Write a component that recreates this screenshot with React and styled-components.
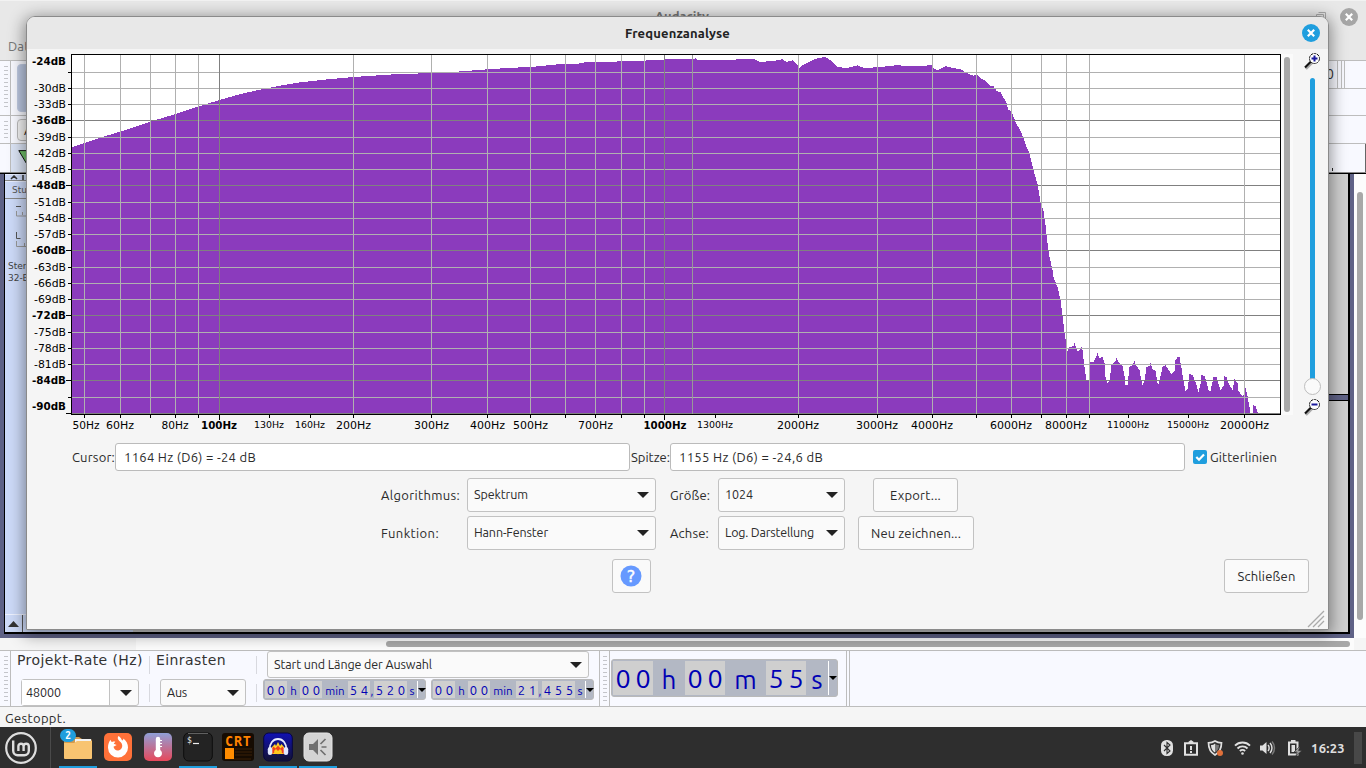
import React, { useLayoutEffect, useRef } from "react";
import styled, { createGlobalStyle } from "styled-components";

const Global = createGlobalStyle`
  *, *::before, *::after { box-sizing: border-box; }
  body { margin: 0; overflow: hidden; background: #2e2e2e; }
`;

const ui = `"Ubuntu", "Noto Sans", sans-serif`;
const dejavu = `"DejaVu Sans", sans-serif`;

/* ---------- text with a fixed advance width ---------- */

const TextSpan = styled.span`
  display: inline-block;
  flex: none;
  white-space: pre;
  font-family: ${(p) => (p.$face === "dejavu" ? dejavu : ui)};
  font-size: ${(p) => p.$size || 13}px;
  font-weight: ${(p) => p.$weight || 400};
  color: ${(p) => p.$color || "#2b2b2b"};
  line-height: ${(p) => p.$line || 18}px;
`;

function Text({ w, size, weight, color, face, line, children }) {
  const ref = useRef(null);
  useLayoutEffect(() => {
    const el = ref.current;
    if (!w) return;
    el.style.letterSpacing = "0px";
    const natural = el.getBoundingClientRect().width;
    el.style.letterSpacing = `${(w - natural) / el.textContent.length}px`;
  }, [w]);
  return (
    <TextSpan ref={ref} $size={size} $weight={weight} $color={color} $face={face} $line={line}>
      {children}
    </TextSpan>
  );
}

/* ---------- screen and main window ---------- */

const Screen = styled.div`
  position: relative;
  width: 1366px;
  height: 768px;
  overflow: hidden;
  display: flex;
  flex-direction: column;
  background: #f5f5f5;
`;

const MainTitle = styled.div`
  flex: none;
  height: 34px;
  display: flex;
  align-items: center;
  justify-content: center;
  padding: 0 8px 2px 326px;
  background: #e8e8e8;
  border-top: 1px solid #f2f2f2;
`;
const TitleCaption = styled.div`
  flex: 1;
  padding: 0 0 2px 329px;
  display: flex;
`;
const TitleButtons = styled.div`
  display: flex;
  align-items: center;
  gap: 14px;
`;
const MenuBar = styled.div`
  flex: none;
  height: 27px;
  padding: 3px 8px 0;
  background: #e8e8e8;
  border-bottom: 1px solid #bdbdbd;
`;
const ToolRow = styled.div`
  flex: none;
  height: ${(p) => p.$h}px;
  display: flex;
  justify-content: space-between;
  background: #f8f9ff;
  border-bottom: 1px solid ${(p) => p.$line || "#bdbdbd"};
`;
const RowSide = styled.div`
  display: flex;
  height: 100%;
`;
const Grip = styled.div`
  width: 11px;
  flex: none;
  border-right: 1px solid #bdbdbd;
  border-left: ${(p) => (p.$left ? "1px solid #bdbdbd" : "0")};
  padding: ${(p) => p.$pad || "5px"} 2px 5px ${(p) => (p.$left ? 3 : 4)}px;
  &::before {
    content: "";
    display: block;
    height: 100%;
    background: ${(p) =>
      p.$plain ? "none" : "repeating-linear-gradient(#c4c5ca 0 1px, transparent 1px 4px)"};
  }
`;
const ToolButton = styled.div`
  margin: 3px 0 0 6px;
  width: 50px;
  height: ${(p) => p.$h}px;
  border-radius: 4px;
  border: 1px solid ${(p) => p.$line};
  background: ${(p) => p.$bg};
  padding: 1px 6px;
`;
const PinBox = styled.div`
  width: 30px;
  background: #dbe4f5;
  padding: 6px 0 0 7px;
`;
const MeterEnd = styled.div`
  display: flex;
  width: 38px;
  height: 28px;
  border-bottom: 1px solid #bdbdbd;
`;
const MeterStub = styled.div`
  width: ${(p) => p.$w}px;
  flex: none;
  border-right: 1px solid #bdbdbd;
`;
const MeterDigit = styled.div`
  width: 9px;
  flex: none;
  display: flex;
  justify-content: flex-end;
  padding: 4px 3px 0 0;
`;
const RulerEnd = styled.div`
  width: 34px;
  border-right: 1px solid #666;
  &::before {
    content: "";
    display: block;
    width: 1px;
    height: 3px;
    margin: 24px 0 0 0;
    background: #222;
  }
`;
const Workspace = styled.div`
  flex: none;
  height: 465px;
  display: flex;
`;
const Tracks = styled.div`
  width: 1354px;
  display: flex;
  background: #5f6286;
  padding: 0 4px 4px;
  border-top: 1px solid #000;
`;
const TrackFrame = styled.div`
  flex: 1;
  display: flex;
  justify-content: space-between;
  border: solid #000;
  border-width: 0 2px 2px 1px;
  background: linear-gradient(90deg, #c8c8c8 405px, #ccd4ea 405px 635px, #c8c8c8 635px);
`;
const TrackPanel = styled.div`
  width: 128px;
  background: #cddaf8;
  display: flex;
  flex-direction: column;
  color: #555;
`;
const PanelLine = styled.div`
  height: ${(p) => p.$h}px;
  flex: none;
  display: flex;
  padding: ${(p) => p.$pad || "0"};
  border-bottom: ${(p) => (p.$line ? "1px solid #888" : "0")};
  border-top: ${(p) => (p.$line ? "1px solid #e8eeff" : "0")};
`;
const CollapseRow = styled.div`
  margin-top: auto;
  height: 18px;
  display: flex;
  border-top: 1px solid #eef2ff;
`;
const CollapseCell = styled.div`
  width: 18px;
  display: flex;
  align-items: center;
  justify-content: center;
  border-right: 1px solid #555;
`;
const ClipEnd = styled.div`
  width: 60px;
  display: flex;
  flex-direction: column;
`;
const ClipArea = styled.div`
  height: ${(p) => p.$h}px;
  flex: ${(p) => (p.$h ? "none" : 1)};
  background: #cfcfcf;
`;
const ClipGap = styled.div`
  height: 7px;
  background: #5f6286;
  border: solid #000;
  border-width: 1px 0;
`;
const VScroll = styled.div`
  width: 12px;
  background: #fcfcfc;
  padding: 18px 3px 18px;
  border-top: 1px solid #000;
  &::before {
    content: "";
    display: block;
    height: 100%;
    width: 6px;
    border-radius: 3px;
    background: #a8a8a8;
  }
`;
const HScroll = styled.div`
  flex: none;
  height: 13px;
  background: linear-gradient(90deg, #f5f5f5 136px, #fcfcfc 136px 1354px, #f5f5f5 1354px);
  border-bottom: 1px solid #bdbdbd;
  padding: 3px 16px 3px 386px;
  &::before {
    content: "";
    display: block;
    height: 6px;
    border-radius: 3px;
    background: #a8a8a8;
  }
`;

/* ---------- selection toolbar ---------- */

const BottomBar = styled.div`
  flex: none;
  height: 56px;
  display: flex;
  background: #f8f9ff;
  border-bottom: 1px solid #bdbdbd;
`;
const BarColumn = styled.div`
  width: ${(p) => p.$w}px;
  flex: none;
  padding-left: ${(p) => p.$pl || 0}px;
  display: flex;
  flex-direction: column;
`;
const BarHeading = styled.div`
  height: 28px;
  display: flex;
  margin-left: -4px;
`;
const SepColumn = styled.div`
  width: 1px;
  flex: none;
  display: flex;
  flex-direction: column;
  gap: 10px;
  padding-top: 5px;
  &::before,
  &::after {
    content: "";
    height: 18px;
    background: #d8d9df;
  }
`;
const Select = styled.div`
  width: ${(p) => p.$w}px;
  height: ${(p) => p.$h}px;
  flex: none;
  display: flex;
  align-items: center;
  justify-content: space-between;
  padding: 0 6px;
  border: 1px solid #c2c2c2;
  border-radius: 3px;
  background: #fafafa;
  & > span {
    padding-bottom: 2px;
  }
`;
const Combo = styled.div`
  width: 118px;
  height: 27px;
  display: flex;
  border: 1px solid #c2c2c2;
  border-radius: 3px;
  background: #fafafa;
`;
const ComboField = styled.div`
  width: 88px;
  padding: 3px 0 0 4px;
  background: #fff;
  border-right: 1px solid #c2c2c2;
`;
const ComboArrow = styled.div`
  flex: 1;
  display: flex;
  align-items: center;
  justify-content: center;
  padding-left: 3px;
`;
const TimeRow = styled.div`
  display: flex;
  gap: 5px;
  margin: 1px 0 0 -4px;
`;
const TimeBox = styled.div`
  display: flex;
  flex: none;
  width: ${(p) => (p.$big ? 227 : 163)}px;
  height: ${(p) => (p.$big ? 38 : 21)}px;
  border: 1px solid #b9b9b9;
  border-radius: 3px;
  background: #b3b8c4;
  padding: 1px;
`;
const Digit = styled.span`
  width: ${(p) => (p.$big ? 20 : 11)}px;
  height: 100%;
  flex: none;
  background: #cfcfcf;
  color: #0000b4;
  font: ${(p) => (p.$big ? "27px/34px" : "13px/18px")} ${ui};
  text-align: center;
`;
const Unit = styled.span`
  width: ${(p) => p.$w}px;
  flex: none;
  color: #0000b4;
  font: ${(p) => (p.$big ? "26px/38px" : "11.5px/20px")} ${ui};
  text-align: center;
  white-space: nowrap;
`;
const TimeDrop = styled.span`
  flex: 1;
  display: flex;
  align-items: center;
  justify-content: center;
  border-left: 1px solid #fff;
`;
const BigTimeCell = styled.div`
  width: 237px;
  flex: none;
  padding: 8px 0 0 1px;
  border-right: 1px solid #bdbdbd;
`;
const BarEdge = styled.div`
  width: 3px;
  border-right: 1px solid #bdbdbd;
`;
const StatusBar = styled.div`
  flex: none;
  height: 20px;
  padding: 2px 5px;
  background: #f5f5f5;
`;

/* ---------- task bar ---------- */

const TaskBar = styled.div`
  position: relative;
  flex: none;
  height: 41px;
  display: flex;
  background: #2e2e2e;
`;
const StartCell = styled.div`
  width: 51px;
  padding: 5px 0 0 5px;
  border-right: 1px solid #4a4a4a;
`;
const TaskList = styled.div`
  display: flex;
  gap: 2px;
  padding-left: 8px;
  flex: 1;
`;
const Task = styled.div`
  position: relative;
  width: 38px;
  display: flex;
  justify-content: center;
  padding-top: 4px;
  border-bottom: 2px solid ${(p) => (p.$active ? "#1f9ede" : "transparent")};
`;
const Badge = styled.span`
  position: absolute;
  left: 1px;
  top: 2px;
  width: 16px;
  height: 13px;
  border-radius: 7px;
  background: #1f9ede;
  color: #fff;
  font: 700 10px/13px ${ui};
  text-align: center;
`;
const Tray = styled.div`
  display: flex;
  align-items: center;
  padding: 1px 4px 0 0;
`;
const TrayItem = styled.div`
  width: ${(p) => p.$w}px;
  display: flex;
  justify-content: center;
`;
const ShowDesktop = styled.div`
  width: 8px;
  height: 32px;
  background: #484848;
  margin-left: 9px;
`;

/* ---------- dialog ---------- */

const Dialog = styled.div`
  position: absolute;
  left: 26px;
  top: 16px;
  width: 1303px;
  height: 614px;
  border: 1px solid #8a8a8a;
  border-radius: 9px 9px 0 0;
  overflow: hidden;
  background: #f5f5f5;
  display: flex;
  flex-direction: column;
`;
const DialogShade = styled.div`
  position: absolute;
  left: 26px;
  top: 16px;
  width: 1303px;
  height: 614px;
  border-radius: 9px 9px 0 0;
  box-shadow: 0 3px 16px 2px rgba(0, 0, 0, 0.42);
`;
const DialogTitle = styled.div`
  height: 32px;
  flex: none;
  display: flex;
  align-items: center;
  justify-content: space-between;
  padding: 0 8px 0 598px;
  background: #e8e8e8;
`;
const ChartRow = styled.div`
  display: flex;
  height: 394px;
  flex: none;
`;
const PlotScroll = styled.div`
  width: 12px;
  height: 361px;
  margin-top: 5px;
  padding: 3px;
  background: #fafafa;
  &::before {
    content: "";
    display: block;
    width: 6px;
    height: 355px;
    border-radius: 3px;
    background: #a8a8a8;
  }
`;
const ZoomColumn = styled.div`
  width: 35px;
  padding: 4px 0 0 11px;
  display: flex;
  flex-direction: column;
`;
const ZoomSlider = styled.div`
  height: 329px;
  padding-top: 5px;
  flex: none;
`;
const InfoRow = styled.div`
  display: flex;
  align-items: center;
  height: 28px;
  flex: none;
  padding-left: 45px;
`;
const Field = styled.div`
  width: 515px;
  height: 28px;
  flex: none;
  display: flex;
  align-items: center;
  padding-left: 8px;
  border: 1px solid #bbb;
  border-radius: 3px;
  background: #fff;
`;
const SpitzeGap = styled.div`
  width: 40px;
  padding-left: 1px;
  display: flex;
`;
const LabelSlot = styled.div`
  width: ${(p) => p.$w}px;
  display: flex;
`;
const Check = styled.div`
  width: 14px;
  height: 14px;
  margin: 0 3px 0 8px;
  border-radius: 2px;
  background: #1f9ede;
  display: flex;
`;
const Options = styled.div`
  display: grid;
  grid-template-columns: 86px 189px 14px 48px 127px 13px 116px;
  grid-template-rows: 34px 34px;
  row-gap: 4px;
  align-items: center;
  justify-items: start;
  padding: 7px 0 0 354px;
`;
const Button = styled.div`
  width: ${(p) => p.$w}px;
  height: 34px;
  display: flex;
  align-items: center;
  justify-content: center;
  justify-self: ${(p) => (p.$inset ? "start" : "center")};
  margin-left: ${(p) => p.$inset || 0}px;
  padding: ${(p) => p.$pad || 0};
  border: 1px solid #c2c2c2;
  border-radius: 3px;
  background: #fafafa;
`;
const ActionRow = styled.div`
  display: flex;
  justify-content: space-between;
  padding: 9px 19px 0 585px;
`;
const ResizeRow = styled.div`
  display: flex;
  justify-content: flex-end;
  padding: 17px 3px 0 0;
`;

/* ---------- spectrum data ---------- */

const curve = [
  [72, 147], [84, 143], [102, 137], [120, 131.5], [150, 121.5], [175, 114], [198, 106.5], [219, 100],
  [240, 94], [260, 89.5], [280, 85.5], [300, 82.3], [325, 79.5], [353, 77], [390, 74.5], [431, 73],
  [460, 71.4], [487, 69.3], [510, 67.8], [530, 67], [550, 65], [560, 64], [577, 64], [579, 63],
  [586, 62.2], [616, 61.5], [643, 61], [648, 60], [668, 59.4], [694, 59.4], [695, 58], [697, 59.5],
  [735, 59.5], [754, 59.3], [760, 62], [775, 60.5], [782, 59.3], [786, 62], [792, 60.4], [799, 67.5],
  [803, 64.5], [812, 60], [818, 58], [825, 57], [831, 61], [837, 67], [847, 68], [857, 65.4],
  [864, 68], [880, 67], [898, 65], [903, 66], [931, 65.4], [934, 69], [938, 70], [945, 66],
  [952, 68], [960, 69], [968, 74], [973, 75.5], [976, 74.5], [980, 78], [985, 81], [990, 86],
  [993, 86], [996, 91], [1000, 92], [1006, 103], [1008, 110], [1011, 111], [1015, 122], [1020, 131],
  [1023, 138], [1026, 147], [1029, 153], [1031, 162], [1033, 170], [1037, 184], [1040, 202],
  [1043, 211], [1045, 225], [1047, 243], [1049, 257], [1052, 270], [1053, 277], [1057, 287],
  [1060, 300], [1062, 315], [1064, 332], [1066, 345], [1067, 351], [1069, 347], [1073, 346],
  [1074, 343], [1076, 348], [1077, 351], [1079, 350], [1081, 347], [1082, 350], [1084, 367],
  [1086, 381], [1088, 381], [1089, 362], [1093, 362], [1095, 358], [1097, 353], [1099, 358],
  [1102, 357], [1104, 363], [1105, 377], [1107, 383], [1109, 381], [1111, 365], [1115, 361],
  [1116, 358], [1118, 362], [1122, 366], [1124, 376], [1125, 385], [1127, 385], [1129, 367],
  [1132, 365], [1134, 361], [1136, 366], [1139, 370], [1141, 381], [1142, 385], [1144, 380],
  [1146, 367], [1149, 366], [1150, 363], [1152, 369], [1155, 371], [1157, 383], [1158, 384],
  [1160, 376], [1162, 367], [1165, 365], [1168, 370], [1171, 374], [1174, 371], [1175, 360],
  [1177, 357], [1179, 357], [1181, 368], [1183, 381], [1185, 391], [1187, 389], [1188, 382],
  [1189, 374], [1192, 375], [1195, 382], [1198, 392], [1200, 384], [1201, 375], [1204, 376],
  [1206, 382], [1208, 390], [1210, 391], [1213, 377], [1216, 377], [1218, 384], [1220, 390],
  [1223, 386], [1224, 376], [1226, 377], [1228, 383], [1232, 390], [1234, 379], [1237, 383],
  [1238, 391], [1242, 396], [1244, 393], [1245, 388], [1247, 396], [1249, 407], [1250, 413],
  [1252, 413], [1253, 405], [1255, 406], [1257, 412], [1258, 413.5],
];

function spectrumPath() {
  let d = "M72 414";
  let i = 0;
  for (let x = 72; x < 1258; x++) {
    while (i < curve.length - 2 && curve[i + 1][0] <= x) i++;
    const [x0, y0] = curve[i];
    const [x1, y1] = curve[i + 1];
    const y = Math.round(y0 + ((y1 - y0) * (x - x0)) / (x1 - x0));
    d += `V${y}H${x + 1}`;
  }
  return d + "V414Z";
}

const rows = [
  [72, null], [88, "-30dB"], [104, "-33dB"], [120, "-36dB", 1], [137, "-39dB"], [153, "-42dB"],
  [169, "-45dB"], [185, "-48dB", 1], [202, "-51dB"], [218, "-54dB"], [234, "-57dB"],
  [250, "-60dB", 1], [267, "-63dB"], [283, "-66dB"], [299, "-69dB"], [315, "-72dB", 1],
  [332, "-75dB"], [348, "-78dB"], [364, "-81dB"], [380, "-84dB", 1], [397, null], [413, null, 1],
];

const columns = [
  84, 120, 150, 175, 198, 353, 431, 487, 530, 565, 595, 621, 644, 692, 798, 877, 932, 976, 1011,
  1041, 1066, 1089, 1244,
];

const marks = [
  [84, 86, "50Hz", 27], [120, 120, "60Hz", 28], [175, 175, "80Hz", 27], [219, 219, "100Hz", 36, "b"],
  [269, 269, "130Hz", 30, "s"], [310, 310, "160Hz", 30, "s"], [353, 353.5, "200Hz", 35],
  [431, 431.5, "300Hz", 35], [487, 487.5, "400Hz", 35], [530, 530.5, "500Hz", 35],
  [595, 595.5, "700Hz", 35], [664, 665, "1000Hz", 43, "b"], [715, 715, "1300Hz", 36, "s"],
  [798, 798, "2000Hz", 42], [877, 877, "3000Hz", 42], [932, 932, "4000Hz", 42],
  [1011, 1011, "6000Hz", 42], [1066, 1066, "8000Hz", 42], [1128, 1128, "11000Hz", 42, "s"],
  [1188, 1188, "15000Hz", 42, "s"], [1244, 1244.5, "20000Hz", 49],
];

const ChartSvg = styled.svg`
  display: block;
  flex: none;
  font-family: ${dejavu};
  font-size: 11px;
  fill: #000;
`;

function Spectrum() {
  return (
    <ChartSvg width="1254" height="390" viewBox="27 49 1254 390">
      <g shapeRendering="crispEdges">
        <rect x="71" y="54" width="1210" height="361" fill="#000" />
        <rect x="72" y="55" width="1208" height="359" fill="#fff" />
        <path d={spectrumPath()} fill="#8b3bbd" />
        {rows.map(([y, , major]) => (
          <g key={y}>
            <rect x="72" y={y} width="1208" height="1" fill={major ? "#808080" : "#b0b0b0"} />
            <rect x={major ? 66 : 68} y={y} width={major ? 5 : 3} height="1" />
          </g>
        ))}
        {columns.map((x) => (
          <rect key={x} x={x} y="55" width="1" height="359" fill={x === 692 ? "#989898" : "#b0b0b0"} />
        ))}
        {[219, 664].map((x) => (
          <rect key={x} x={x} y="55" width="1" height="359" fill="#808080" />
        ))}
        {marks.map(([x, , , , kind]) => (
          <rect key={x} x={x} y="415" width="1" height={kind === "b" ? 5 : 3} />
        ))}
        {[150, 198, 565, 621, 644, 976, 1041, 1089].map((x) => (
          <rect key={x} x={x} y="415" width="1" height="3" />
        ))}
      </g>
      <text x="32" y="65" fontWeight="700" textLength="34" lengthAdjust="spacingAndGlyphs">-24dB</text>
      <text x="32" y="410" fontWeight="700" textLength="34" lengthAdjust="spacingAndGlyphs">-90dB</text>
      {rows.filter((r) => r[1]).map(([y, label, major]) => (
        <text
          key={y}
          x={major ? 32 : 34}
          y={y + 4}
          fontWeight={major ? 700 : 400}
          textLength={major ? 34 : 32}
          lengthAdjust="spacingAndGlyphs"
        >
          {label}
        </text>
      ))}
      {marks.map(([x, c, label, w, kind]) => (
        <text
          key={x}
          x={c - w / 2}
          y={kind === "s" ? 428 : 429}
          fontSize={kind === "s" ? 9.5 : 11}
          fontWeight={kind === "b" ? 700 : 400}
          textLength={w}
          lengthAdjust="spacingAndGlyphs"
        >
          {label}
        </text>
      ))}
    </ChartSvg>
  );
}

/* ---------- icons ---------- */

const IconSvg = styled.svg`
  display: block;
  flex: none;
`;

const Arrow = ({ w = 12, h = 6, color = "#222" }) => (
  <IconSvg width={w} height={h} viewBox="0 0 12 6">
    <path d="M0 0h12L6 6z" fill={color} />
  </IconSvg>
);

const CloseIcon = ({ color }) => (
  <IconSvg width="18" height="18" viewBox="0 0 18 18">
    <circle cx="9" cy="9" r="9" fill={color} />
    <path d="M5.800 5.800l6.400 6.400M12.200 5.800l-6.400 6.400" stroke="#fff" strokeWidth="2.200" />
  </IconSvg>
);

const Magnifier = ({ plus }) => (
  <IconSvg width="17" height="17" viewBox="0 0 17 17">
    <path d="M2 16l6.500-6.500" stroke="#aaa" strokeWidth="2.400" />
    <path d="M1 14.500L7 8.500" stroke="#111" strokeWidth="2.200" />
    <circle cx="10.500" cy="5.500" r="5" fill="#fff" stroke="#111" strokeWidth="1" strokeDasharray="2.500 .7" />
    <path d={plus ? "M7.500 5.500h6M10.500 2.500v6" : "M7.500 5.500h6"} stroke="#1a1a9c" strokeWidth="2" />
  </IconSvg>
);

const ZoomTrack = () => (
  <IconSvg width="18" height="322" viewBox="0 0 18 322">
    <rect x="6" y="3" width="5" height="310" rx="2.500" fill="#1f9ede" />
    <circle cx="8.500" cy="311.500" r="8" fill="#fafafa" stroke="#bdbdbd" />
  </IconSvg>
);

const HelpIcon = () => (
  <IconSvg width="22" height="22" viewBox="0 0 22 22">
    <circle cx="11" cy="11" r="10.500" fill="#6699ff" />
    <text x="11" y="16.500" textAnchor="middle" fontFamily="DejaVu Sans, sans-serif" fontSize="16" fill="#fff" stroke="#fff" strokeWidth=".4">?</text>
  </IconSvg>
);

const ResizeIcon = () => (
  <IconSvg width="18" height="18" viewBox="0 0 18 18" stroke="#aaa" strokeWidth="1.300">
    <path d="M1 17L17 1M6 17L17 6M11 17l6-6" />
  </IconSvg>
);

const MintLogo = () => (
  <IconSvg width="32" height="32" viewBox="0 0 32 32" fill="none" stroke="#dedede">
    <circle cx="16" cy="16" r="14.800" strokeWidth="2.200" />
    <path
      d="M8.200 8.500v10.300a4.400 4.400 0 0 0 4.400 4.400h6.800a4.400 4.400 0 0 0 4.400-4.400v-4.500a2.600 2.600 0 0 0-5.200 0V19M18.600 19v-4.700a2.600 2.600 0 0 0-5.200 0V19"
      strokeWidth="2.400"
    />
  </IconSvg>
);

const FolderIcon = () => (
  <IconSvg width="30" height="32" viewBox="0 0 30 32">
    <path d="M1 6h15l3 2h8a2 2 0 0 1 2 2v15H1z" fill="#d49a4c" />
    <rect x="12" y="8" width="16" height="4" fill="#f2f2f2" />
    <path d="M1 12h10l3-2h15v17a1 1 0 0 1-1 1H2a1 1 0 0 1-1-1z" fill="#f8c471" />
  </IconSvg>
);

const FirefoxIcon = () => (
  <IconSvg width="30" height="32" viewBox="0 0 30 32">
    <rect x="1" y="2" width="28" height="28" rx="5" fill="#ff7139" />
    <path
      d="M15.500 5c2 1.400 3.200 3 3.600 4.600.9-.4 1.300-1.100 1.300-2.100 3 2.400 4.600 5.500 4.600 9a10 10 0 0 1-20 .2c0-3.500 1-6 2.600-8 .2 1.200.7 1.900 1.500 2.300 1-.5 2.200-.6 3.200-.3l-1.600 2.100 3 1.200-3.200 1.800c.6 2.700 2.600 4 5 3.600 2.600-.5 4-2.500 3.700-5.100-.3-2.500-2.300-3.400-3.700-5.200-.9-1.300-1-2.700 0-4.100z"
      fill="#fff"
    />
  </IconSvg>
);

const ThermoIcon = () => (
  <IconSvg width="30" height="32" viewBox="0 0 30 32">
    <defs>
      <linearGradient id="thermo" x1="0" y1="0" x2="0" y2="1">
        <stop offset="0" stopColor="#8fa0d8" />
        <stop offset="1" stopColor="#e8485a" />
      </linearGradient>
    </defs>
    <rect x="1" y="2" width="28" height="28" rx="5" fill="url(#thermo)" />
    <path d="M12.800 8a2.200 2.200 0 0 1 4.400 0v11a4 4 0 1 1-4.400 0z" fill="#fff" />
    <path d="M17 9.500h2M17 12.500h2M17 15.500h2" stroke="#fff" />
  </IconSvg>
);

const TerminalIcon = () => (
  <IconSvg width="30" height="32" viewBox="0 0 30 32">
    <rect x=".7" y="2" width="28.600" height="28" rx="5" fill="#232323" stroke="#0d0d0d" />
    <path d="M5 2.500h20" stroke="#606060" />
    <text x="4" y="12" fontFamily="DejaVu Sans Mono, monospace" fontSize="8" fill="#eee">$</text>
    <path d="M10 12.500h6" stroke="#eee" strokeWidth="1.200" />
  </IconSvg>
);

const CrtIcon = () => (
  <IconSvg width="32" height="32" viewBox="0 0 32 32">
    <rect x="0" y="2" width="32" height="28" rx="3" fill="#150b02" />
    <path d="M13 18h17M13 21h17M13 24h17M3 28h26" stroke="#3a2006" />
    <text x="3" y="14.500" fontFamily="DejaVu Sans Mono, monospace" fontWeight="700" fontSize="13.500" fill="#ff8200" textLength="26">CRT</text>
    <rect x="3" y="17" width="9" height="11" fill="#ff8c00" />
  </IconSvg>
);

const AudacityIcon = () => (
  <IconSvg width="30" height="32" viewBox="0 0 30 32">
    <defs>
      <linearGradient id="auda" x1="0" y1="0" x2="0" y2="1">
        <stop offset="0" stopColor="#1010b4" />
        <stop offset="1" stopColor="#141432" />
      </linearGradient>
    </defs>
    <rect x=".7" y="2" width="28.600" height="28" rx="5" fill="url(#auda)" stroke="#060640" />
    <path d="M9 16l3-3 1 2 2-4 2 4 1.500-2L21 16v7H9z" fill="#ffd22a" />
    <path d="M8.500 19l2-3.500 2 2 2.500-3 2.500 3 2-2 2 3.500-1 4-2.500-2-3 2.500-3-2.500-2.500 2z" fill="#f0401c" />
    <path d="M11 20l2-2 2 2 2-2 2 2-1 3h-6z" fill="#ffc81e" />
    <path d="M6.500 19c0-6.500 3.500-11 8.500-11s8.500 4.500 8.500 11" fill="none" stroke="#e8ecff" strokeWidth="1.800" />
    <rect x="4.800" y="16" width="4.500" height="8" rx="2.200" fill="#e4eaff" />
    <rect x="20.700" y="16" width="4.500" height="8" rx="2.200" fill="#e4eaff" />
  </IconSvg>
);

const SoundIcon = () => (
  <IconSvg width="30" height="32" viewBox="0 0 30 32">
    <rect x="1" y="2" width="28" height="28" rx="5" fill="#d4d4d4" stroke="#e4e4e4" />
    <path d="M6 13h4l5-5v16l-5-5H6z" fill="#707070" />
    <path d="M17.500 13l5-5M18.500 16h5M17.500 19l5 5" stroke="#707070" strokeWidth="1.700" />
  </IconSvg>
);

const BluetoothIcon = () => (
  <IconSvg width="12" height="16" viewBox="0 0 12 16">
    <rect width="12" height="16" rx="5.500" fill="#e0e0e0" />
    <path d="M3 5l6 6-3 2.500v-11L9 5l-6 6" fill="none" stroke="#2e2e2e" strokeWidth="1.100" />
  </IconSvg>
);
const ClipboardIcon = () => (
  <IconSvg width="14" height="16" viewBox="0 0 14 16">
    <path d="M1 3.200h12v11.600H1z" fill="none" stroke="#e0e0e0" strokeWidth="2" />
    <path d="M4.500 4V1.800L7 0l2.500 1.800V4z" fill="#e0e0e0" />
    <path d="M7 6v4M7 11v2" stroke="#e0e0e0" strokeWidth="2" />
  </IconSvg>
);
const ShieldIcon = () => (
  <IconSvg width="17" height="16" viewBox="0 0 17 16">
    <path d="M8 1c2 1.300 4 1.800 6.500 1.800C14.500 9 12.500 12.500 8 15 3.500 12.500 1.500 9 1.500 2.800 4 2.800 6 2.300 8 1z" fill="#2e2e2e" stroke="#e0e0e0" strokeWidth="1.700" />
    <path d="M8 3.500v9C5.500 11 4 8.500 4 5c1.500 0 3-.5 4-1.500z" fill="#e0e0e0" />
    <path d="M8 3.500v9c2.500-1.500 4-4 4-7.500-1.500 0-3-.5-4-1.500z" fill="#777" />
    <circle cx="13" cy="13" r="3" fill="#e0703a" />
  </IconSvg>
);
const WifiIcon = () => (
  <IconSvg width="17" height="16" viewBox="0 0 17 16" fill="none" stroke="#e0e0e0" strokeWidth="1.900">
    <path d="M1 5.700a10.500 10.500 0 0 1 15 0M3.500 8.500a7 7 0 0 1 10 0M5.900 11.100a3.700 3.700 0 0 1 5.200 0" />
    <circle cx="8.500" cy="13.500" r="1.300" fill="#e0e0e0" stroke="none" />
  </IconSvg>
);
const VolumeIcon = () => (
  <IconSvg width="17" height="16" viewBox="0 0 17 16" fill="none">
    <path d="M1 5.500h2.500L7.500 2v12l-4-3.500H1z" fill="#e0e0e0" />
    <path d="M9 5c1.500 1.500 1.500 4.500 0 6M11 3c2.600 2.600 2.600 7.400 0 10" stroke="#e0e0e0" strokeWidth="1.500" />
    <path d="M13 1.500c3.300 3.500 3.300 9.500 0 13" stroke="#777" strokeWidth="1.500" />
  </IconSvg>
);
const BatteryIcon = () => (
  <IconSvg width="15" height="16" viewBox="0 0 15 16">
    <path d="M2 2.500h8.500v12H2z" fill="none" stroke="#e0e0e0" strokeWidth="2" />
    <path d="M4 0h4.500v3H4zM4.500 5h3.500v7H4.500z" fill="#e0e0e0" />
    <path d="M12 7l-5 5h3l-1 4 6-5.500h-3.500L13 7z" fill="#999" stroke="#2e2e2e" strokeWidth=".6" />
  </IconSvg>
);

/* ---------- compound parts ---------- */

function TimeField({ parts, big }) {
  return (
    <TimeBox $big={big}>
      {parts.map(([value, w], i) =>
        w ? (
          <Unit key={i} $w={w} $big={big}>{value}</Unit>
        ) : (
          value.split("").map((d, j) => <Digit key={`${i}-${j}`} $big={big}>{d}</Digit>)
        )
      )}
      <TimeDrop><Arrow w={8} h={4} color="#000" /></TimeDrop>
    </TimeBox>
  );
}

const smallTime = (sec, ms) => [
  ["00"], ["h", 13], ["00"], ["min", 26], [sec], [",", 4], [ms], ["s", 10],
];

function MainWindow() {
  return (
    <>
      <MainTitle>
        <TitleCaption><Text w={54} weight={700} color="#777">Audacity</Text></TitleCaption>
        <TitleButtons>
          <IconSvg width="10" height="10" viewBox="0 0 10 10" fill="none" stroke="#aaa">
            <path d="M2.500.5h7v7M.5 2.500h7v7h-7z" />
          </IconSvg>
          <CloseIcon color="#a6a6a6" />
        </TitleButtons>
      </MainTitle>
      <MenuBar><Text w={32} color="#777">Datei</Text></MenuBar>
      <ToolRow $h={55}>
        <RowSide>
          <Grip /><ToolButton $h={48} $line="#c0cbe2" $bg="#bac6df" />
        </RowSide>
        <MeterEnd>
          <MeterDigit><Text size={14} color="#333">0</Text></MeterDigit>
          <MeterStub $w={1} />
          <MeterStub $w={4} />
          <MeterStub $w={3} />
        </MeterEnd>
      </ToolRow>
      <ToolRow $h={28}>
        <RowSide>
          <Grip />
          <ToolButton $h={22} $line="#bbb" $bg="#f4f4f4"><Text size={13}>A</Text></ToolButton>
        </RowSide>
      </ToolRow>
      <ToolRow $h={29} $line="#8a8a8a">
        <RowSide>
          <Grip $plain />
          <PinBox>
            <IconSvg width="18" height="16" viewBox="0 0 18 16">
              <path d="M.8.600h16L8.800 14z" fill="#71c26b" stroke="#111" />
            </IconSvg>
          </PinBox>
        </RowSide>
        <RulerEnd />
      </ToolRow>
      <Workspace>
        <Tracks>
          <TrackFrame>
            <TrackPanel>
              <PanelLine $h={7} $pad="0 5px" $line>
                <IconSvg width="30" height="5" viewBox="0 0 30 5" stroke="#333" fill="none">
                  <path d="M1 4l3-3 3 3M13 0v5" strokeWidth="1.500" />
                </IconSvg>
              </PanelLine>
              <PanelLine $h={18} $pad="1px 7px" $line>
                <Text face="dejavu" size={9} line={14} color="#555">Stu</Text>
              </PanelLine>
              <PanelLine $h={30} $pad="4px 10px">
                <IconSvg width="20" height="16" viewBox="0 0 20 16" stroke="#555" fill="none">
                  <path d="M1 3.500h5" /><path d="M1.500 8v5h18M7.500 12V9" stroke="#999" />
                </IconSvg>
              </PanelLine>
              <PanelLine $h={31} $pad="2px 11px">
                <IconSvg width="20" height="20" viewBox="0 0 20 20" stroke="#555" fill="none">
                  <path d="M.5 1v6.500h4" /><path d="M.5 10v5.500h19M8.500 15v-3" stroke="#999" />
                </IconSvg>
              </PanelLine>
              <PanelLine $h={12} $pad="0 3px"><Text face="dejavu" size={9} line={12} color="#444">Stereo</Text></PanelLine>
              <PanelLine $h={12} $pad="0 3px"><Text face="dejavu" size={9} line={12} color="#444">32-Bit</Text></PanelLine>
              <CollapseRow>
                <CollapseCell><IconSvg width="11" height="6" viewBox="0 0 11 6"><path d="M0 6l5.500-6L11 6z" fill="#333" /></IconSvg></CollapseCell>
              </CollapseRow>
            </TrackPanel>
            <ClipEnd>
              <ClipArea $h={220} />
              <ClipGap />
              <ClipArea />
            </ClipEnd>
          </TrackFrame>
        </Tracks>
        <VScroll />
      </Workspace>
      <HScroll />
      <BottomBar>
        <Grip />
        <BarColumn $w={138} $pl={10}>
          <BarHeading><Text face="dejavu" size={14} w={126} color="#333">Projekt-Rate (Hz)</Text></BarHeading>
          <Combo>
            <ComboField><Text w={35} size={12.5}>48000</Text></ComboField>
            <ComboArrow><Arrow /></ComboArrow>
          </Combo>
        </BarColumn>
        <SepColumn />
        <BarColumn $w={106} $pl={10}>
          <BarHeading><Text face="dejavu" size={14} w={70} color="#333">Einrasten</Text></BarHeading>
          <Select $w={86} $h={27}><Text w={20} size={12.5}>Aus</Text><Arrow /></Select>
        </BarColumn>
        <SepColumn />
        <BarColumn $w={342} $pl={10}>
          <Select $w={322} $h={27}><Text w={158} size={12.5}>Start und Länge der Auswahl</Text><Arrow /></Select>
          <TimeRow>
            <TimeField parts={smallTime("54", "520")} />
            <TimeField parts={smallTime("21", "455")} />
          </TimeRow>
        </BarColumn>
        <Grip $left />
        <BigTimeCell>
          <TimeField
            big
            parts={[["00"], ["h", 32], ["00"], ["m", 41], ["55"], ["s", 22]]}
          />
        </BigTimeCell>
        <BarEdge />
      </BottomBar>
      <StatusBar><Text w={61}>Gestoppt.</Text></StatusBar>
    </>
  );
}

function FrequencyDialog() {
  return (
    <Dialog>
      <DialogTitle>
        <Text w={105} weight={600} color="#222">Frequenzanalyse</Text>
        <CloseIcon color="#1f9ede" />
      </DialogTitle>
      <ChartRow>
        <Spectrum />
        <PlotScroll />
        <ZoomColumn>
          <Magnifier plus />
          <ZoomSlider><ZoomTrack /></ZoomSlider>
          <Magnifier />
        </ZoomColumn>
      </ChartRow>
      <InfoRow>
        <LabelSlot $w={43}><Text w={43}>Cursor:</Text></LabelSlot>
        <Field><Text w={132}>1164 Hz (D6) = -24 dB</Text></Field>
        <SpitzeGap><Text w={39}>Spitze:</Text></SpitzeGap>
        <Field><Text w={144}>1155 Hz (D6) = -24,6 dB</Text></Field>
        <Check>
          <IconSvg width="14" height="14" viewBox="0 0 14 14" fill="none">
            <path d="M3.300 7l2.700 2.700 5-5.200" stroke="#fff" strokeWidth="2.200" />
          </IconSvg>
        </Check>
        <Text w={67}>Gitterlinien</Text>
      </InfoRow>
      <Options>
        <Text w={79}>Algorithmus:</Text>
        <Select $w={189} $h={34}><Text w={54} size={12.5}>Spektrum</Text><Arrow /></Select>
        <span />
        <Text w={40}>Größe:</Text>
        <Select $w={127} $h={34}><Text w={28} size={12.5}>1024</Text><Arrow /></Select>
        <span />
        <Button $w={85} $inset={15}><Text w={51}>Export...</Text></Button>
        <Text w={58}>Funktion:</Text>
        <Select $w={189} $h={34}><Text w={74} size={12.5}>Hann-Fenster</Text><Arrow /></Select>
        <span />
        <Text w={39}>Achse:</Text>
        <Select $w={127} $h={34}><Text w={89} size={12.5}>Log. Darstellung</Text><Arrow /></Select>
        <span />
        <Button $w={116}><Text w={90}>Neu zeichnen...</Text></Button>
      </Options>
      <ActionRow>
        <Button $w={39} $pad="0 1px 1px 0"><HelpIcon /></Button>
        <Button $w={85}><Text w={58}>Schließen</Text></Button>
      </ActionRow>
      <ResizeRow><ResizeIcon /></ResizeRow>
    </Dialog>
  );
}

function Panel() {
  return (
    <TaskBar>
      <StartCell><MintLogo /></StartCell>
      <TaskList>
        <Task $active><FolderIcon /><Badge>2</Badge></Task>
        <Task><FirefoxIcon /></Task>
        <Task><ThermoIcon /></Task>
        <Task $active><TerminalIcon /></Task>
        <Task><CrtIcon /></Task>
        <Task $active><AudacityIcon /></Task>
        <Task $active><SoundIcon /></Task>
      </TaskList>
      <Tray>
        <TrayItem $w={24}><BluetoothIcon /></TrayItem>
        <TrayItem $w={24}><ClipboardIcon /></TrayItem>
        <TrayItem $w={24}><ShieldIcon /></TrayItem>
        <TrayItem $w={30}><WifiIcon /></TrayItem>
        <TrayItem $w={20}><VolumeIcon /></TrayItem>
        <TrayItem $w={34}><BatteryIcon /></TrayItem>
        <Text w={34} weight={700} color="#dedede">16:23</Text>
        <ShowDesktop />
      </Tray>
    </TaskBar>
  );
}

export default function App() {
  return (
    <Screen>
      <Global />
      <MainWindow />
      <DialogShade />
      <Panel />
      <FrequencyDialog />
    </Screen>
  );
}
